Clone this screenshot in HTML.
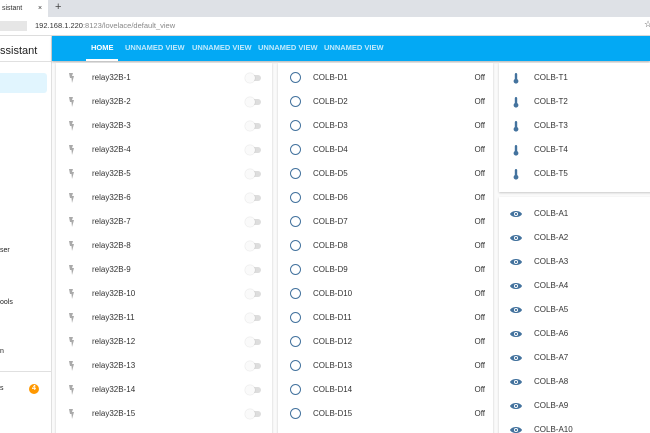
<!DOCTYPE html><html><head><style>
html,body{margin:0;width:650px;height:433px;overflow:hidden}
body{background:#fafafa;font-family:"Liberation Sans",Roboto,sans-serif;position:relative}
.a{position:absolute}
.tabbar{left:0;top:0;width:650px;height:17px;background:#dee1e6}
.tab{left:0;top:0;width:48px;height:17px;background:#fff;font-size:7px;color:#333;line-height:17px}
.addr{left:0;top:17px;width:650px;height:18px;background:#fff;border-bottom:1px solid #ddd}
.hdr{left:52px;top:36px;width:598px;height:25px;background:#03a9f4;box-shadow:0 1px 2px rgba(0,0,0,.3)}
.nav{top:0;height:25px;line-height:24px;color:#fff;font-size:7.5px;font-weight:bold;opacity:.75}
.side{left:0;top:36px;width:51px;height:397px;background:#fff;border-right:1px solid #e0e0e0}
.card{background:#fff;box-shadow:0 1px 2px rgba(0,0,0,.2)}
.row{position:absolute;font-size:8px;color:#333;left:0;right:0;height:24px;line-height:24px}
.sw{position:absolute;width:14px;height:6px;border-radius:3px;background:#ddd;top:9px}
.sw:before{content:"";position:absolute;left:-2px;top:-2px;width:10px;height:10px;border-radius:50%;background:#fafafa;box-shadow:0 0 1px rgba(0,0,0,.25)}
.circ{position:absolute;left:12px;top:6px;width:9px;height:9px;border:1.5px solid #44739e;border-radius:50%}
</style></head><body>
<div class="a tabbar"></div>
<div class="a tab">&nbsp;sistant<span style="position:absolute;left:38px">×</span></div>
<div class="a" style="left:55px;top:1px;font-size:11px;color:#444">+</div>
<div class="a addr"><div class="a" style="left:0;top:4px;width:27px;height:10px;background:#e6e6e6"></div><div class="a" style="left:35px;top:4px;font-size:7.5px;color:#333">192.168.1.220<span style="color:#888">:8123/lovelace/default_view</span></div><div class="a" style="left:644px;top:2px;font-size:9px;color:#555">☆</div></div>
<div class="a side"><div class="a" style="left:0;top:0;width:51px;height:25px;border-bottom:1px solid #e0e0e0;font-size:11px;line-height:30px;color:#222">ssistant</div>
<div class="a" style="left:0;top:37px;width:47px;height:20px;background:#e1f5fe;border-radius:0 3px 3px 0"></div>
<div class="a" style="left:0;top:211px;font-size:7px;color:#222">ser</div>
<div class="a" style="left:0;top:263px;font-size:7px;color:#222">ools</div>
<div class="a" style="left:0;top:312px;font-size:7px;color:#222">n</div>
<div class="a" style="left:0;top:335px;width:51px;border-top:1px solid #e0e0e0"></div>
<div class="a" style="left:0;top:349px;font-size:7px;color:#222">s</div>
<div class="a" style="left:29px;top:348px;width:10px;height:10px;border-radius:50%;background:#ff9800;color:#fff;font-size:7px;font-weight:bold;text-align:center;line-height:10px">4</div>
</div>
<div class="a hdr">
<div class="a nav" style="left:39px;opacity:1">HOME</div><div class="a" style="left:34px;top:23px;width:32px;height:2px;background:#fff"></div>
<div class="a nav" style="left:73px">UNNAMED VIEW</div>
<div class="a nav" style="left:140px">UNNAMED VIEW</div>
<div class="a nav" style="left:206px">UNNAMED VIEW</div>
<div class="a nav" style="left:272px">UNNAMED VIEW</div>
</div>
<div class="a card" style="left:56px;top:63px;width:216px;height:380px" id="c1"></div>
<div class="a card" style="left:278px;top:63px;width:215px;height:380px" id="c2"></div>
<div class="a card" style="left:499px;top:63px;width:155px;height:129px" id="c3"></div>
<div class="a card" style="left:499px;top:197px;width:155px;height:250px" id="c4"></div>
<script>
function add(id,html){document.getElementById(id).insertAdjacentHTML('beforeend',html)}
for(let i=1;i<=15;i++){let t=3+24*(i-1);
add('c1',`<div class="row" style="top:${t}px"><svg style="position:absolute;left:13px;top:7px" width="6" height="10" viewBox="0 0 6 10"><path d="M0 0H4L3 3H5L3 10L2.5 5H1Z" fill="#aaa"/></svg><span style="position:absolute;left:36px">relay32B-${i}</span><div class="sw" style="left:191px"></div></div>`);
add('c2',`<div class="row" style="top:${t}px"><div class="circ"></div><span style="position:absolute;left:35px">COLB-D${i}</span><span style="position:absolute;right:8px">Off</span></div>`);}
for(let i=1;i<=5;i++){let t=3+24*(i-1);
add('c3',`<div class="row" style="top:${t}px"><svg style="position:absolute;left:14px;top:7px" width="6" height="11" viewBox="0 0 6 11"><rect x="1.8" y="0" width="2.4" height="8" rx="1.2" fill="#44739e"/><circle cx="3" cy="8.2" r="2.4" fill="#44739e"/></svg><span style="position:absolute;left:35px">COLB-T${i}</span></div>`);}
for(let i=1;i<=10;i++){let t=5+24*(i-1);
add('c4',`<div class="row" style="top:${t}px"><svg style="position:absolute;left:11px;top:8px" width="12" height="8" viewBox="0 0 12 8"><path d="M0 4C2 0 10 0 12 4C10 8 2 8 0 4Z" fill="#44739e"/><circle cx="6" cy="4" r="2" fill="#fff"/><circle cx="6" cy="4" r="1.1" fill="#44739e"/></svg><span style="position:absolute;left:35px">COLB-A${i}</span></div>`);}
</script>
</body></html>
